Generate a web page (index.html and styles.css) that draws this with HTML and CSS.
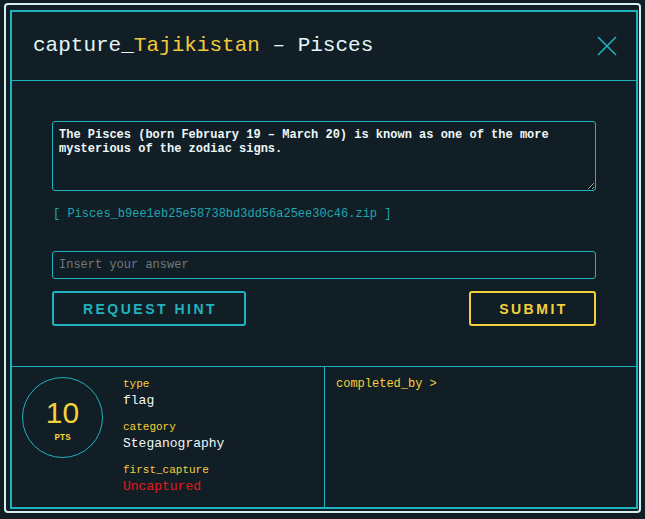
FILE: index.html
```html
<!DOCTYPE html>
<html>
<head>
<meta charset="utf-8">
<link rel="stylesheet" href="styles.css">
</head>
<body>
<div class="frame">
  <div class="modal">
    <div class="header">
      <h1 class="title">capture_<span class="accent">Tajikistan</span> – Pisces</h1>
      <button class="close" aria-label="close">
        <svg width="20" height="20" viewBox="0 0 20 20"><path d="M1 1 L19 19 M19 1 L1 19" stroke="#1fb3bd" stroke-width="1.6" fill="none"/></svg>
      </button>
    </div>
    <div class="body">
      <textarea class="desc" readonly>The Pisces (born February 19 – March 20) is known as one of the more mysterious of the zodiac signs.</textarea>
      <div class="file">[ Pisces_b9ee1eb25e58738bd3dd56a25ee30c46.zip ]</div>
      <input class="answer" type="text" placeholder="Insert your answer">
      <div class="actions">
        <button class="btn hint">REQUEST HINT</button>
        <button class="btn submit">SUBMIT</button>
      </div>
    </div>
    <div class="footer">
      <div class="left">
        <div class="points">
          <div class="num">10</div>
          <div class="pts">PTS</div>
        </div>
        <div class="info">
          <div class="label">type</div>
          <div class="value">flag</div>
          <div class="label">category</div>
          <div class="value">Steganography</div>
          <div class="label">first_capture</div>
          <div class="value red">Uncaptured</div>
        </div>
      </div>
      <div class="right">
        <div class="label big">completed_by &gt;</div>
      </div>
    </div>
  </div>
</div>
</body>
</html>
```

FILE: styles.css
```css
* { box-sizing: border-box; }
html, body {
  margin: 0;
  padding: 0;
  background: #121e25;
  width: 645px;
  height: 519px;
  overflow: hidden;
}
.frame {
  margin: 3px 0 0 4px;
  width: 637px;
  height: 510px;
  border: 2px solid #d6eef0;
  border-radius: 4px;
  padding: 5px 1px 2px 4px;
}
.modal {
  width: 628px;
  height: 499px;
  border: 2px solid #1fb3bd;
  display: flex;
  flex-direction: column;
  font-family: "Liberation Mono", "Courier New", monospace;
  color: #e3f6f8;
}
.header {
  height: 69px;
  border-bottom: 1px solid #1fb3bd;
  display: flex;
  align-items: center;
  justify-content: space-between;
  padding: 0 19px 0 21px;
  flex: none;
}
.title {
  margin: 0;
  font-size: 21px;
  font-weight: normal;
  color: #e3f6f8;
  line-height: 24px;
}
.accent { color: #f2c93b; }
.close {
  background: none;
  border: 0;
  padding: 0;
  width: 20px;
  height: 20px;
  display: flex;
  cursor: pointer;
}
.body {
  padding: 40px 39px 40px 40px;
  display: flex;
  flex-direction: column;
  border-bottom: 1px solid #1fb3bd;
  flex: none;
}
.desc {
  width: 544px;
  height: 70px;
  background: transparent;
  border: 1px solid #1fb3bd;
  border-radius: 3px;
  color: #eef8fa;
  font-family: "Liberation Mono", "Courier New", monospace;
  font-size: 12px;
  font-weight: bold;
  line-height: 14px;
  padding: 6px 6px;
  resize: vertical;
  outline: none;
  margin: 0;
}
.file {
  margin-top: 15px;
  font-size: 12px;
  line-height: 16px;
  color: #1fa6b0;
  padding-left: 1px;
}
.answer {
  margin-top: 29px;
  width: 544px;
  height: 28px;
  background: transparent;
  border: 1px solid #1fb3bd;
  border-radius: 3px;
  padding: 0 6px;
  color: #e3f6f8;
  font-family: "Liberation Mono", "Courier New", monospace;
  font-size: 12px;
  outline: none;
}
.answer::placeholder { color: #6f7a80; }
.actions {
  margin-top: 12px;
  display: flex;
  justify-content: space-between;
  width: 544px;
}
.btn {
  height: 35px;
  background: transparent;
  border: 2px solid;
  border-radius: 3px;
  font-family: "Liberation Sans", Arial, sans-serif;
  font-weight: bold;
  font-size: 14px;
  letter-spacing: 2.5px;
  padding: 0 0 0 2px;
  cursor: pointer;
}
.hint {
  width: 194px;
  color: #1fb3bd;
  border-color: #1fb3bd;
}
.submit {
  width: 127px;
  color: #f2d13b;
  border-color: #f2d13b;
}
.footer {
  flex: 1;
  display: flex;
}
.left {
  width: 313px;
  border-right: 1px solid #1fb3bd;
  display: flex;
  padding: 10px 0 0 10px;
}
.points {
  width: 81px;
  height: 81px;
  border: 1px solid #1fb3bd;
  border-radius: 50%;
  display: flex;
  flex-direction: column;
  align-items: center;
  justify-content: center;
  color: #f2d13b;
  flex: none;
}
.num {
  font-family: "Liberation Sans", Arial, sans-serif;
  font-size: 30px;
  line-height: 28px;
  margin-top: 6px;
}
.pts {
  font-size: 9px;
  font-weight: bold;
  line-height: 10px;
  margin-top: 6px;
}
.info {
  margin-left: 20px;
  margin-top: -1px;
  display: flex;
  flex-direction: column;
}
.label {
  font-size: 11px;
  line-height: 16px;
  color: #f2d13b;
}
.value {
  font-size: 13px;
  line-height: 17px;
  color: #eef8fa;
  margin-bottom: 10px;
}
.value.red { color: #e41a1a; }
.right {
  flex: 1;
  padding: 9px 0 0 11px;
}
.label.big { font-size: 12px; }
```
